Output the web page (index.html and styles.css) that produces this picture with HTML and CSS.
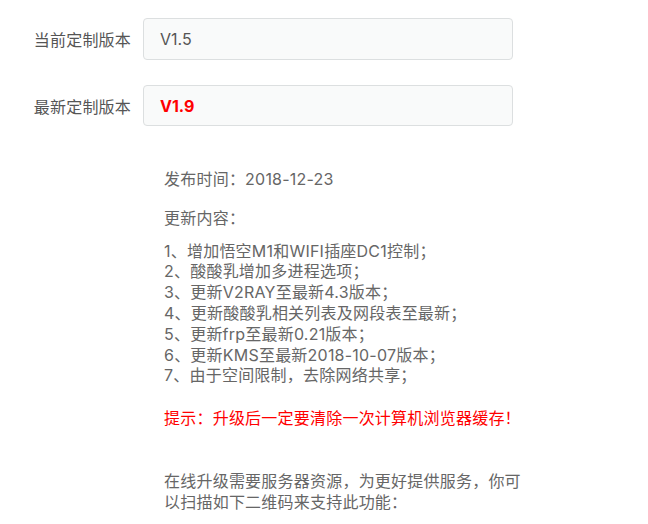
FILE: index.html
```html
<!DOCTYPE html>
<html>
<head>
<meta charset="utf-8">
<link rel="stylesheet" href="styles.css">
</head>
<body>
<div class="page">
  <div class="form">
    <div class="row">
      <label class="label">当前定制版本</label>
      <div class="field">V1.5</div>
    </div>
    <div class="row">
      <label class="label">最新定制版本</label>
      <div class="field new">V1.9</div>
    </div>
  </div>
  <div class="info">
    <p class="date">发布时间：2018-12-23</p>
    <p class="heading">更新内容：</p>
    <ul class="list">
      <li>1、增加悟空M1和WIFI插座DC1控制；</li>
      <li>2、酸酸乳增加多进程选项；</li>
      <li>3、更新V2RAY至最新4.3版本；</li>
      <li>4、更新酸酸乳相关列表及网段表至最新；</li>
      <li>5、更新frp至最新0.21版本；</li>
      <li>6、更新KMS至最新2018-10-07版本；</li>
      <li>7、由于空间限制，去除网络共享；</li>
    </ul>
    <p class="hint">提示：升级后一定要清除一次计算机浏览器缓存！</p>
    <p class="support">在线升级需要服务器资源，为更好提供服务，你可以扫描如下二维码来支持此功能：</p>
  </div>
</div>
</body>
</html>
```

FILE: styles.css
```css
html, body {
  margin: 0;
  padding: 0;
  background: #ffffff;
}
body {
  font-family: "Inter", "Noto Sans CJK SC", sans-serif;
  font-size: 16px;
  color: #666666;
}
.page {
  padding-top: 18px;
}
.form {
  display: flex;
  flex-direction: column;
  gap: 25px;
}
.row {
  display: flex;
  align-items: center;
}
.label {
  text-align: right;
  padding-right: 12px;
  box-sizing: border-box;
  width: 143px;
  color: #555555;
  font-size: 16px;
  letter-spacing: 0.2px;
}
.field {
  width: 370px;
  height: 42px;
  box-sizing: border-box;
  border: 1px solid #dcdfe0;
  border-radius: 4px;
  background: #f9fafa;
  padding-left: 16px;
  display: flex;
  align-items: center;
  color: #555555;
  font-size: 16px;
}
.field.new {
  height: 41px;
  color: #ff0000;
  font-weight: bold;
}
.info {
  padding-left: 164px;
  width: 364px;
  line-height: 20.8px;
  letter-spacing: 0.22px;
}
.info p, .info ul {
  margin: 0;
  padding: 0;
}
.list {
  list-style: none;
}
.date {
  margin-top: 43px !important;
}
.heading {
  margin-top: 18px !important;
}
.list {
  margin-top: 12px !important;
}
.hint {
  margin-top: 22px !important;
  color: #ff0000;
}
.support {
  margin-top: 42px !important;
}
```
